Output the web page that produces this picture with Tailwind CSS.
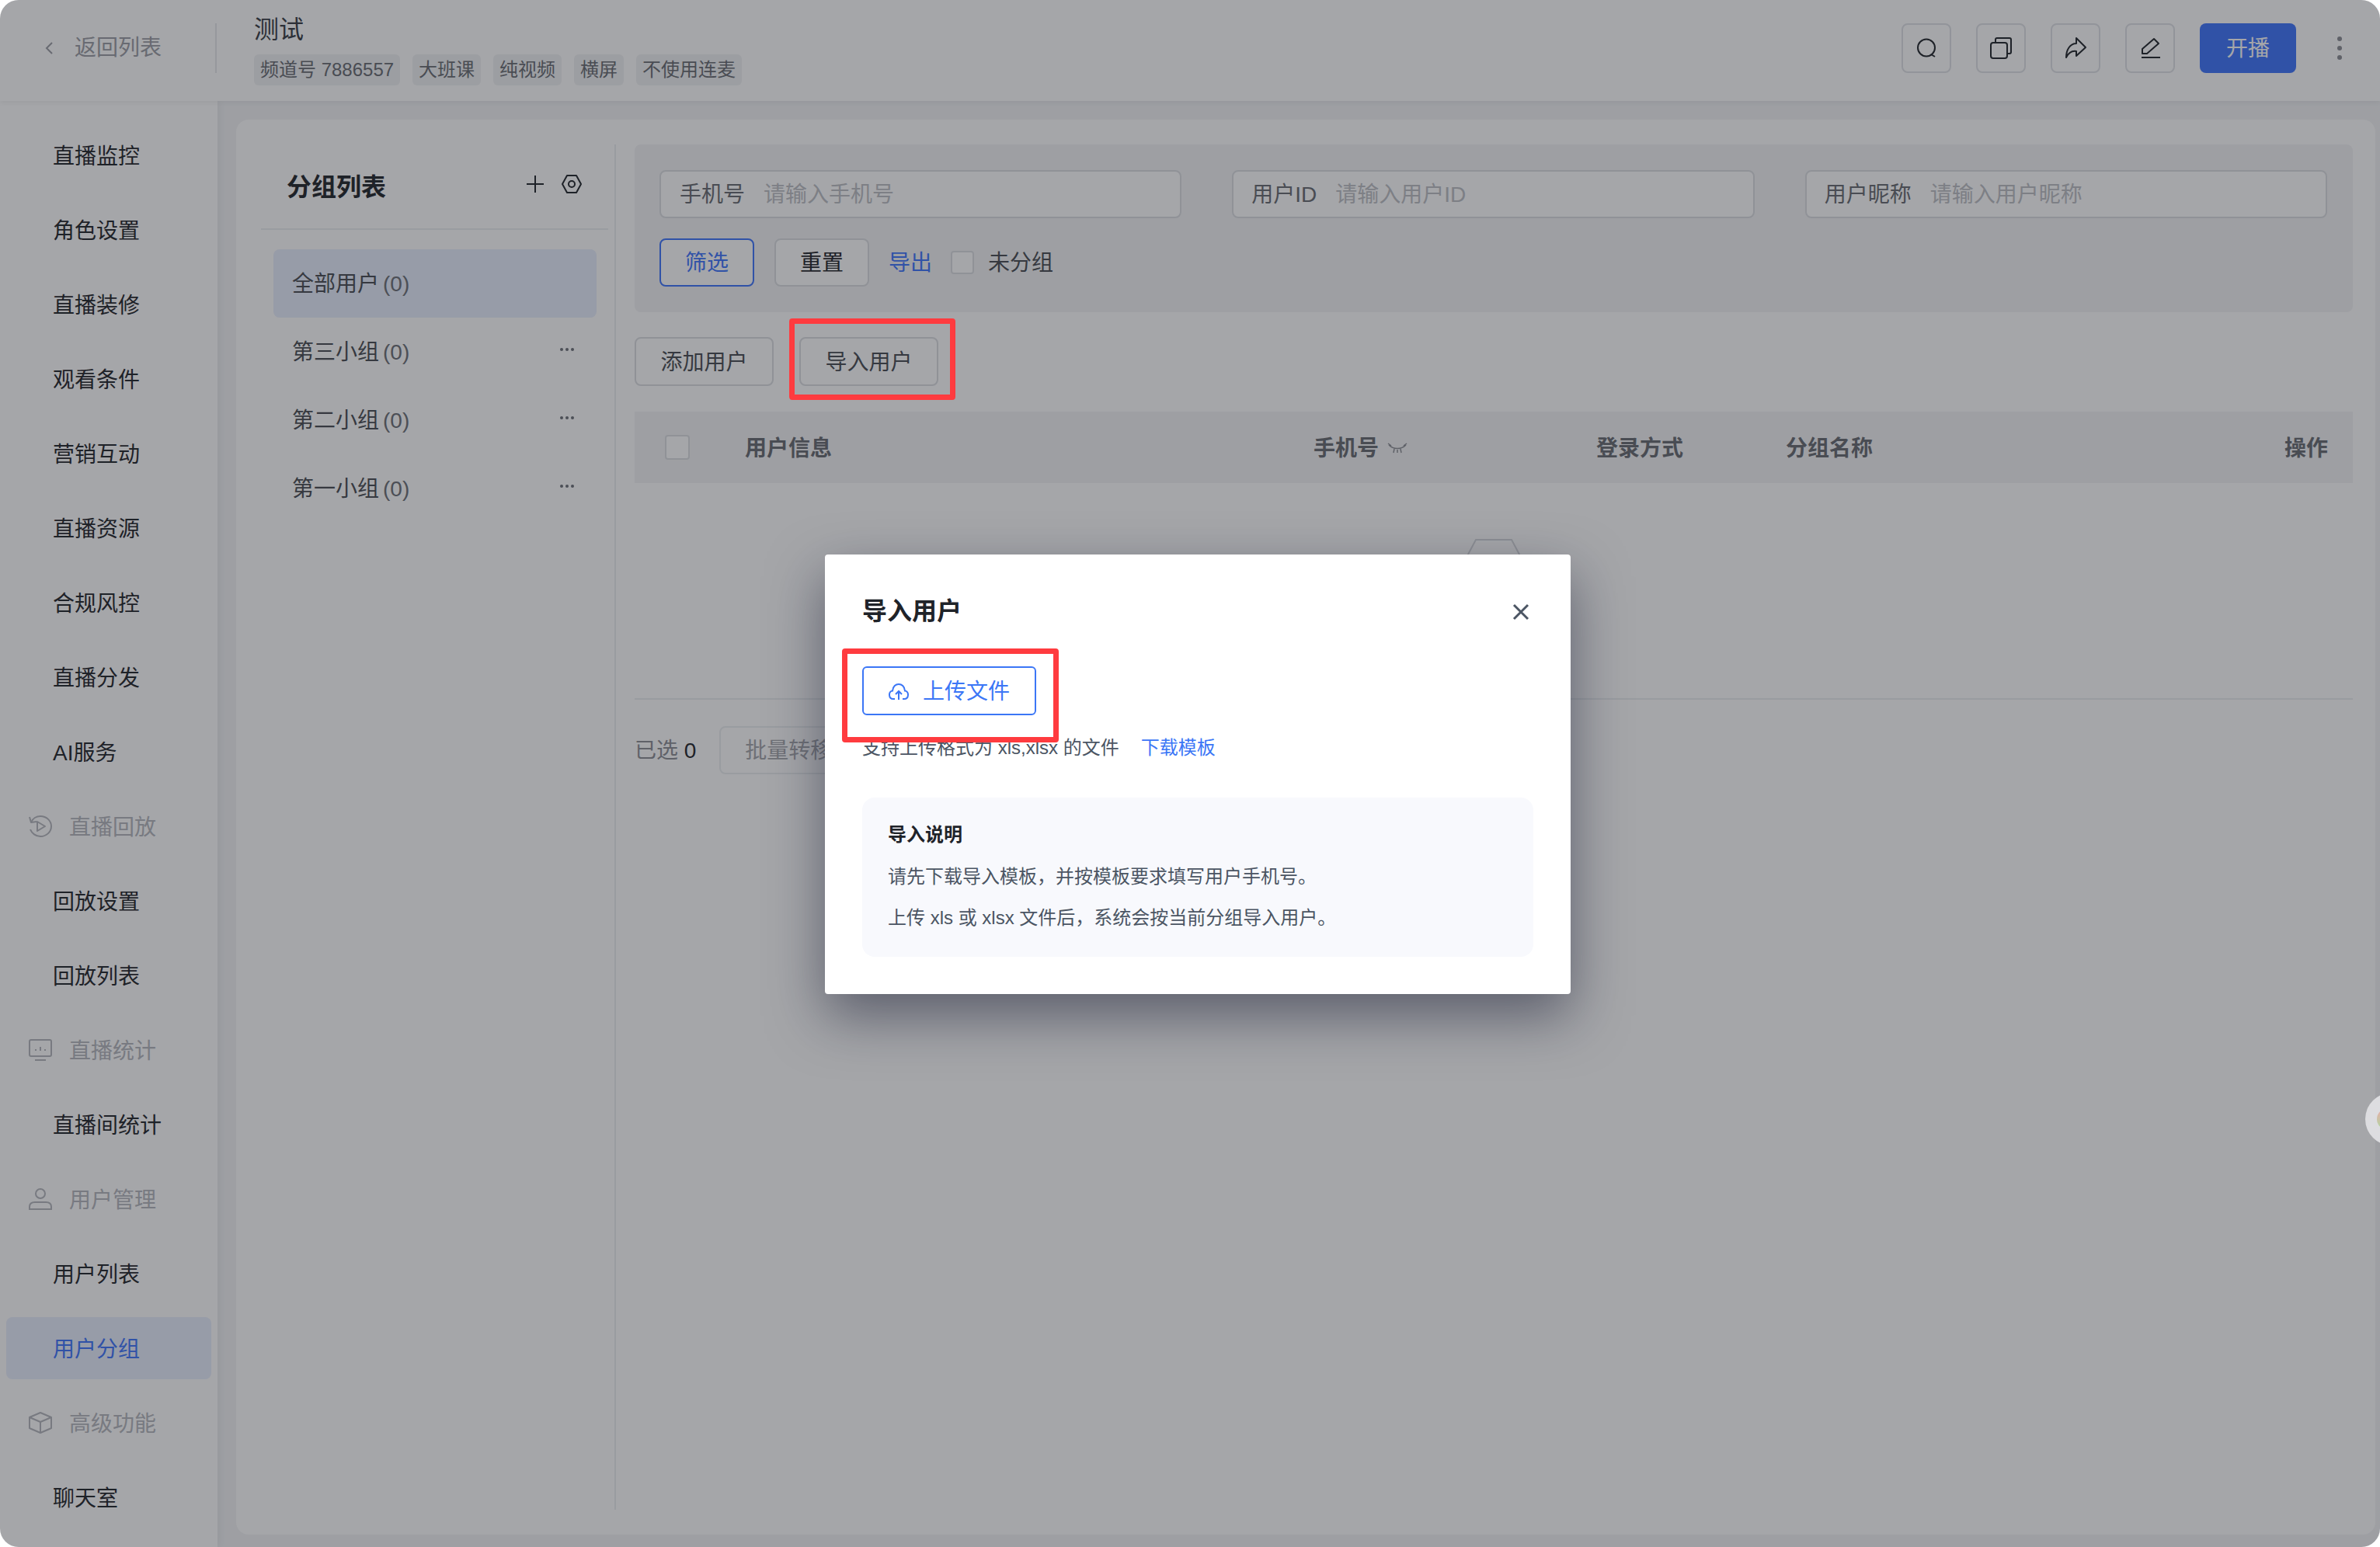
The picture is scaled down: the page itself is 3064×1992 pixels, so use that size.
<!DOCTYPE html>
<html lang="zh-CN">
<head>
  <meta charset="UTF-8" />
  <title>用户分组</title>
  <script src="https://cdn.jsdelivr.net/npm/@tailwindcss/browser@4"></script>
</head>
<body class="bg-white font-['Liberation_Sans','Noto_Sans_CJK_SC',sans-serif]">
<div class="relative w-[3064px] h-[1992px] overflow-hidden rounded-[24px] bg-[#f3f4f6] flex flex-col text-[28px] leading-[40px] text-[#1f2329]">

  <!-- Header -->
  <header class="relative z-10 h-[130px] shrink-0 bg-white flex items-center shadow-[0_3px_6px_rgba(0,0,0,0.05)]">
    <div class="w-[279px] h-[64px] mb-[6px] border-r-2 border-[#e6e8eb] flex items-center pl-[56px] text-[#9a9ca3]">
      <svg class="w-[16px] h-[24px] mr-[24px]" viewBox="0 0 16 24" fill="none" stroke="#9a9ca3" stroke-width="2"><path d="M11 5 L4 12 L11 19"/></svg>
      <span>返回列表</span>
    </div>
    <div class="ml-[48px] h-[130px] pt-[18px]">
      <div class="text-[32px] leading-[40px] text-[#363a42]">测试</div>
      <div class="mt-[12px] flex gap-[16px] text-[24px] leading-[40px] text-[#676a70]">
        <span class="px-[8px] rounded-[6px] bg-[#f1f2f4]">频道号 7886557</span>
        <span class="px-[8px] rounded-[6px] bg-[#f1f2f4]">大班课</span>
        <span class="px-[8px] rounded-[6px] bg-[#f1f2f4]">纯视频</span>
        <span class="px-[8px] rounded-[6px] bg-[#f1f2f4]">横屏</span>
        <span class="px-[8px] rounded-[6px] bg-[#f1f2f4]">不使用连麦</span>
      </div>
    </div>
    <div class="ml-auto mb-[6px] flex items-center gap-[32px] pr-[108px] relative">
      <button class="w-[64px] h-[64px] rounded-[8px] border-2 border-[#e0e2e6] flex items-center justify-center">
        <svg class="w-[32px] h-[32px]" viewBox="0 0 32 32" fill="none" stroke="#1f2329" stroke-width="2"><circle cx="16" cy="15.5" r="11"/><path d="M22 24 L27 27"/></svg>
      </button>
      <button class="w-[64px] h-[64px] rounded-[8px] border-2 border-[#e0e2e6] flex items-center justify-center">
        <svg class="w-[32px] h-[32px]" viewBox="0 0 32 32" fill="none" stroke="#1f2329" stroke-width="2"><rect x="3" y="9" width="21" height="20" rx="3"/><path d="M9 9 V5 a2 2 0 0 1 2 -2 h16 a2 2 0 0 1 2 2 v16 a2 2 0 0 1 -2 2 h-3"/></svg>
      </button>
      <button class="w-[64px] h-[64px] rounded-[8px] border-2 border-[#e0e2e6] flex items-center justify-center">
        <svg class="w-[32px] h-[32px]" viewBox="0 0 32 32" fill="none" stroke="#1f2329" stroke-width="2" stroke-linejoin="round"><path d="M17 3 L29 15 L17 26 V20 C11 19 7 22 4 28 C4 18 9 10 17 10 Z"/></svg>
      </button>
      <button class="w-[64px] h-[64px] rounded-[8px] border-2 border-[#e0e2e6] flex items-center justify-center">
        <svg class="w-[32px] h-[32px]" viewBox="0 0 32 32" fill="none" stroke="#1f2329" stroke-width="2" stroke-linejoin="round"><path d="M6 17 L21 4 L27 10 L12 23 L6 23 Z"/><path d="M5 28 H29"/></svg>
      </button>
      <button class="w-[124px] h-[64px] pt-[2px] rounded-[8px] bg-[#3c73fc] text-white">开播</button>
      <div class="absolute right-[49px] top-[17px] flex flex-col gap-[6px]">
        <span class="w-[6px] h-[6px] rounded-full bg-[#8b8d93]"></span>
        <span class="w-[6px] h-[6px] rounded-full bg-[#8b8d93]"></span>
        <span class="w-[6px] h-[6px] rounded-full bg-[#8b8d93]"></span>
      </div>
    </div>
  </header>

  <div class="flex flex-1 min-h-0">
    <!-- Sidebar -->
    <aside class="w-[280px] shrink-0 bg-white pt-[30px] flex flex-col gap-[16px] shadow-[3px_0_10px_rgba(0,0,0,0.05)] [&>div]:pt-[4px]">
      <div class="h-[80px] shrink-0 flex items-center pl-[68px]">直播监控</div>
      <div class="h-[80px] shrink-0 flex items-center pl-[68px]">角色设置</div>
      <div class="h-[80px] shrink-0 flex items-center pl-[68px]">直播装修</div>
      <div class="h-[80px] shrink-0 flex items-center pl-[68px]">观看条件</div>
      <div class="h-[80px] shrink-0 flex items-center pl-[68px]">营销互动</div>
      <div class="h-[80px] shrink-0 flex items-center pl-[68px]">直播资源</div>
      <div class="h-[80px] shrink-0 flex items-center pl-[68px]">合规风控</div>
      <div class="h-[80px] shrink-0 flex items-center pl-[68px]">直播分发</div>
      <div class="h-[80px] shrink-0 flex items-center pl-[68px]">AI服务</div>
      <div class="h-[80px] shrink-0 flex items-center pl-[36px] gap-[21px] text-[#b4b6bc]">
        <svg class="w-[32px] h-[32px] mb-[4px]" viewBox="0 0 32 32" fill="none" stroke="#b4b6bc" stroke-width="2" stroke-linejoin="round"><path d="M4 11 C6 6 11 3 16 3 C24 3 30 9 30 16 C30 23 24 29 16 29 C10 29 5 25 3 20"/><path d="M2 4 L4 11 L11 10"/><path d="M12 10 L22 16 L12 22 Z"/></svg>
        <span>直播回放</span>
      </div>
      <div class="h-[80px] shrink-0 flex items-center pl-[68px]">回放设置</div>
      <div class="h-[80px] shrink-0 flex items-center pl-[68px]">回放列表</div>
      <div class="h-[80px] shrink-0 flex items-center pl-[36px] gap-[21px] text-[#b4b6bc]">
        <svg class="w-[32px] h-[32px] mb-[4px]" viewBox="0 0 32 32" fill="none" stroke="#b4b6bc" stroke-width="2"><rect x="2" y="3" width="28" height="21" rx="2"/><path d="M9 29 H23"/><path d="M10 15 V17 M16 12 V17 M22 15 V17"/></svg>
        <span>直播统计</span>
      </div>
      <div class="h-[80px] shrink-0 flex items-center pl-[68px]">直播间统计</div>
      <div class="h-[80px] shrink-0 flex items-center pl-[36px] gap-[21px] text-[#b4b6bc]">
        <svg class="w-[32px] h-[32px] mb-[4px]" viewBox="0 0 32 32" fill="none" stroke="#b4b6bc" stroke-width="2"><circle cx="16" cy="9" r="6"/><path d="M2 29 V26 C2 22 5 20 9 20 H23 C27 20 30 22 30 26 V29 Z"/></svg>
        <span>用户管理</span>
      </div>
      <div class="h-[80px] shrink-0 flex items-center pl-[68px]">用户列表</div>
      <div class="h-[80px] shrink-0 flex items-center pl-[60px] ml-[8px] w-[264px] rounded-[8px] bg-[#e8eefd] text-[#3c73fc]">用户分组</div>
      <div class="h-[80px] shrink-0 flex items-center pl-[36px] gap-[21px] text-[#b4b6bc]">
        <svg class="w-[32px] h-[32px] mb-[4px]" viewBox="0 0 32 32" fill="none" stroke="#b4b6bc" stroke-width="2" stroke-linejoin="round"><path d="M16 3 L30 9 V23 L16 29 L2 23 V9 Z"/><path d="M2 9 L16 15 L30 9 M16 15 V29"/></svg>
        <span>高级功能</span>
      </div>
      <div class="h-[80px] shrink-0 flex items-center pl-[68px]">聊天室</div>
    </aside>

    <!-- Main -->
    <main class="flex-1 min-w-0 pl-[24px] pt-[24px] pr-[6px] pb-[16px]">
      <div class="h-full bg-white rounded-[16px] flex pt-[32px] pb-[32px]">

        <!-- Group list -->
        <section class="w-[489px] shrink-0 border-r-2 border-[#eceef1] pr-[8px]">
          <div class="ml-[32px] h-[110px] border-b-2 border-[#eceef1] flex items-center pl-[33px] pr-[34px]">
            <h2 class="text-[32px] font-semibold mt-[2px]">分组列表</h2>
            <svg class="ml-auto mb-[6px] w-[22px] h-[22px]" viewBox="0 0 22 22" fill="none" stroke="#1f2329" stroke-width="2"><path d="M11 0 V22 M0 11 H22"/></svg>
            <svg class="ml-[23px] mb-[6px] w-[26px] h-[24px]" viewBox="0 0 26 24" fill="none" stroke="#1f2329" stroke-width="2" stroke-linejoin="round"><path d="M1 12 L7 1 H19 L25 12 L19 23 H7 Z"/><circle cx="13" cy="12" r="4"/></svg>
          </div>
          <ul class="mt-[25px] ml-[48px] w-[416px] text-[#474a50]">
            <li class="h-[88px] pt-[2px] rounded-[8px] bg-[#e8eefd] flex items-center pl-[24px]">全部用户<span class="ml-[5px] text-[#6b6e75]">(0)</span></li>
            <li class="h-[88px] pt-[2px] flex items-center pl-[24px]">第三小组<span class="ml-[5px] text-[#6b6e75]">(0)</span>
              <svg class="ml-auto mr-[28px] mb-[8px] w-[20px] h-[6px]" viewBox="0 0 20 6" fill="#6b6e75"><circle cx="3" cy="3" r="2"/><circle cx="10" cy="3" r="2"/><circle cx="17" cy="3" r="2"/></svg>
            </li>
            <li class="h-[88px] pt-[2px] flex items-center pl-[24px]">第二小组<span class="ml-[5px] text-[#6b6e75]">(0)</span>
              <svg class="ml-auto mr-[28px] mb-[8px] w-[20px] h-[6px]" viewBox="0 0 20 6" fill="#6b6e75"><circle cx="3" cy="3" r="2"/><circle cx="10" cy="3" r="2"/><circle cx="17" cy="3" r="2"/></svg>
            </li>
            <li class="h-[88px] pt-[2px] flex items-center pl-[24px]">第一小组<span class="ml-[5px] text-[#6b6e75]">(0)</span>
              <svg class="ml-auto mr-[28px] mb-[8px] w-[20px] h-[6px]" viewBox="0 0 20 6" fill="#6b6e75"><circle cx="3" cy="3" r="2"/><circle cx="10" cy="3" r="2"/><circle cx="17" cy="3" r="2"/></svg>
            </li>
          </ul>
        </section>

        <!-- Users -->
        <section class="ml-[24px] w-[2212px] shrink-0">
          <div class="h-[216px] rounded-[8px] bg-[#f3f4f6] pl-[32px] pr-[33px] pt-[33px]">
            <div class="grid grid-cols-3 gap-[65px]">
              <div class="h-[62px] pt-[1px] rounded-[8px] border-2 border-[#dcdee2] bg-white flex items-center pl-[24px] gap-[24px] text-[#676a70]">手机号<span class="text-[#bcbec4]">请输入手机号</span></div>
              <div class="h-[62px] pt-[1px] rounded-[8px] border-2 border-[#dcdee2] bg-white flex items-center pl-[23px] gap-[24px] text-[#676a70]">用户ID<span class="text-[#bcbec4]">请输入用户ID</span></div>
              <div class="h-[62px] pt-[1px] rounded-[8px] border-2 border-[#dcdee2] bg-white flex items-center pl-[23px] gap-[24px] text-[#676a70]">用户昵称<span class="text-[#bcbec4]">请输入用户昵称</span></div>
            </div>
            <div class="mt-[26px] flex items-center">
              <button class="w-[122px] h-[62px] pt-[2px] rounded-[8px] border-2 border-[#3c73fc] bg-white text-[#3c73fc]">筛选</button>
              <button class="ml-[26px] w-[122px] h-[62px] pt-[2px] rounded-[8px] border-2 border-[#dcdee2] bg-white">重置</button>
              <a class="ml-[25px] pt-[2px] text-[#3c73fc]">导出</a>
              <span class="ml-[24px] w-[30px] h-[30px] rounded-[4px] border-2 border-[#dcdee2] bg-white"></span>
              <span class="ml-[18px] pt-[2px] text-[#474a50]">未分组</span>
            </div>
          </div>

          <div class="mt-[32px] flex gap-[33px]">
            <button class="w-[179px] h-[63px] pt-[2px] rounded-[8px] border-2 border-[#dcdee2] bg-white text-[#474a50]">添加用户</button>
            <button class="w-[179px] h-[63px] pt-[2px] rounded-[8px] border-2 border-[#dcdee2] bg-white text-[#474a50]">导入用户</button>
          </div>

          <div class="mt-[33px] h-[92px] pt-[3px] bg-[#f3f4f6] flex items-center font-semibold text-[#676a70]">
            <div class="w-[142px] pl-[39px] mb-[3px]"><div class="w-[32px] h-[32px] rounded-[4px] border-2 border-[#dcdee2] bg-white"></div></div>
            <div class="w-[732px]">用户信息</div>
            <div class="w-[364px] flex items-center">手机号
              <svg class="ml-[11px] w-[26px] h-[16px]" viewBox="0 0 26 16" fill="none" stroke="#8b8d93" stroke-width="1.5"><path d="M2 3 C8 9 18 9 24 3 M1 1 L5 4 M25 1 L21 4 M9 8 L8 13 M13 9 V13 M17 8 L18 13"/></svg>
            </div>
            <div class="w-[244px]">登录方式</div>
            <div class="flex-1">分组名称</div>
            <div class="pr-[32px]">操作</div>
          </div>

          <div class="h-[279px] border-b-2 border-[#eceef1] flex justify-center">
            <svg class="mt-[72px] w-[100px] h-[100px]" viewBox="0 0 100 100" fill="none" stroke="#d6d8dc" stroke-width="2"><path d="M27 1 H73 L99 50 L73 99 H27 L1 50 Z"/></svg>
          </div>

          <div class="mt-[34px] flex items-center">
            <span class="pt-[1px] text-[#8b8d93]">已选 <span class="text-[#1f2329]">0</span></span>
            <button class="ml-[30px] w-[178px] h-[62px] pt-[2px] rounded-[8px] border-2 border-[#eceef1] bg-white text-[#a3a5ab]">批量转移</button>
          </div>
        </section>
      </div>
    </main>
  </div>

  <!-- Modal mask -->
  <div class="absolute inset-0 z-20 bg-[#1f2127]/40"></div>

  <div class="absolute z-30 left-[1062px] top-[714px] w-[960px] h-[566px] rounded-[4px] bg-white px-[48px] pt-[52px] shadow-[0_28px_70px_rgba(20,24,48,0.5)]">
    <div class="flex items-center justify-between">
      <h3 class="text-[32px] font-semibold mt-[1px]">导入用户</h3>
      <svg class="mr-[5px] mt-[3px] w-[22px] h-[22px]" viewBox="0 0 22 22" fill="none" stroke="#4b5563" stroke-width="3"><path d="M2 2 L20 20 M20 2 L2 20"/></svg>
    </div>
    <button class="mt-[51px] w-[224px] h-[63px] pt-[2px] rounded-[6px] border-2 border-[#3b76f6] flex items-center justify-center gap-[18px] text-[#3b76f6]">
      <svg class="w-[26px] h-[24px]" viewBox="0 0 26 24" fill="none" stroke="#3b76f6" stroke-width="2"><path d="M8 21 H6 C-0.5 21 -0.5 11 5 10.5 C6 -1 20 -1 21 10.5 C26.5 11 26.5 21 20 21 H18"/><path d="M13 22 V11 M9 15 L13 11 L17 15"/></svg>
      上传文件
    </button>
    <p class="mt-[26px] text-[24px] leading-[32px] text-[#4b5563]">支持上传格式为 xls,xlsx 的文件<a class="ml-[28px] text-[#3b76f6]">下载模板</a></p>
    <div class="mt-[48px] h-[205px] rounded-[16px] bg-[#f8f9fd] pl-[33px] pt-[32px] text-[24px] leading-[32px] text-[#4b5563]">
      <div class="font-semibold text-[#1f2329]">导入说明</div>
      <p class="mt-[22px]">请先下载导入模板，并按模板要求填写用户手机号。</p>
      <p class="mt-[21px]">上传 xls 或 xlsx 文件后，系统会按当前分组导入用户。</p>
    </div>
  </div>

  <!-- Annotation boxes -->
  <div class="absolute z-30 left-[1016px] top-[410px] w-[214px] h-[105px] rounded-[4px] border-[7px] border-[#ff3b3f]"></div>
  <div class="absolute z-30 left-[1084px] top-[835px] w-[279px] h-[121px] rounded-[4px] border-[7px] border-[#ff3b3f]"></div>

  <!-- Floating helper -->
  <div class="absolute z-30 left-[3045px] top-[1407px] w-[68px] h-[68px] rounded-full bg-[#dddde0]">
    <div class="ml-[15px] mt-[20px] w-[28px] h-[28px] rounded-full bg-linear-to-b from-[#e8a8a8] to-[#a8d8a0]"></div>
  </div>
</div>
</body>
</html>
